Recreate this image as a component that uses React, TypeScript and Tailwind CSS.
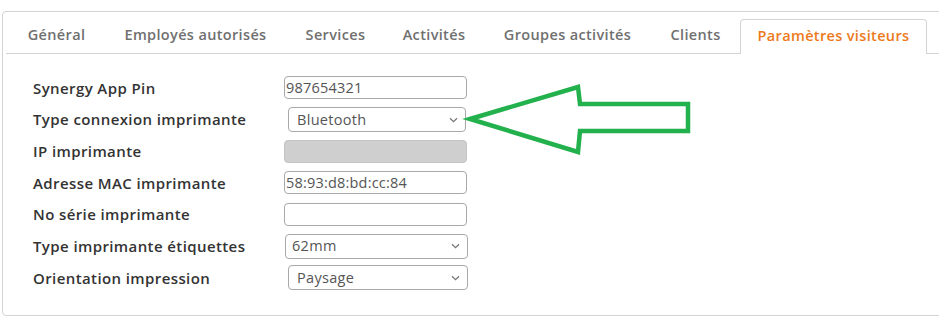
import React from "react";

const tabs: { label: string; w: number; active?: boolean }[] = [
  { label: "Général", w: 95 },
  { label: "Employés autorisés", w: 183 },
  { label: "Services", w: 97 },
  { label: "Activités", w: 100 },
  { label: "Groupes activités", w: 167 },
  { label: "Clients", w: 89 },
  { label: "Paramètres visiteurs", w: 187, active: true },
];

function Chevron() {
  return (
    <svg width="9" height="6" viewBox="0 0 9 6" className="absolute right-[7px] top-1/2 -translate-y-1/2">
      <path d="M1 1.2 L4.5 4.6 L8 1.2" fill="none" stroke="#777" strokeWidth="1.3" />
    </svg>
  );
}

function TextInput({ value, disabled }: { value?: string; disabled?: boolean }) {
  return (
    <div
      className={
        "h-[23px] w-[183px] rounded-[4px] border flex items-center pl-[1px] text-[14.5px] tracking-[0.2px] text-[#555] " +
        (disabled ? "bg-[#cfcfcf] border-[#c4c4c4]" : "bg-white border-[#a9a9a9]")
      }
    >
      {value}
    </div>
  );
}

function Select({ value, ml, w, pl }: { value: string; ml: number; w: number; pl: number }) {
  return (
    <div
      className="relative h-[25px] rounded-[4px] border border-[#a9a9a9] bg-white flex items-center text-[14.5px] tracking-[0.3px] text-[#555]"
      style={{ marginLeft: ml, width: w, paddingLeft: pl }}
    >
      {value}
      <Chevron />
    </div>
  );
}

export default function App() {
  const rows: { label: string; field: React.ReactNode }[] = [
    { label: "Synergy App Pin", field: <TextInput value="987654321" /> },
    { label: "Type connexion imprimante", field: <Select value="Bluetooth" ml={4} w={178} pl={8} /> },
    { label: "IP imprimante", field: <TextInput disabled /> },
    { label: "Adresse MAC imprimante", field: <TextInput value="58:93:d8:bd:cc:84" /> },
    { label: "No série imprimante", field: <TextInput /> },
    { label: "Type imprimante étiquettes", field: <Select value="62mm" ml={1} w={183} pl={6} /> },
    { label: "Orientation impression", field: <Select value="Paysage" ml={4} w={180} pl={8} /> },
  ];

  return (
    <div className="relative w-[939px] h-[327px] bg-white overflow-hidden" style={{ fontFamily: '"Open Sans", "Noto Sans", sans-serif' }}>
      <div className="pt-[11px] pl-[2px]">
        <div className="w-[960px] h-[305px] border border-[#d4d4d4] rounded-[4px] pl-[3px]">
          <div className="pt-[7px] pl-[3px] flex border-b border-[#d4d4d4]">
            {tabs.map((t) => (
              <div
                key={t.label}
                className={
                  "h-[34px] pb-[2px] flex items-center justify-center text-[14.5px] tracking-[0.35px] font-semibold " +
                  (t.active
                    ? "bg-white border border-b-0 border-[#d4d4d4] rounded-t-[4px] text-[#ec7a1c] -mb-[1px] h-[35px]"
                    : "text-[#707070]")
                }
                style={{ width: t.w }}
              >
                {t.label}
              </div>
            ))}
          </div>
          <div className="pt-[18px] pl-[27px]">
            {rows.map((r) => (
              <div key={r.label} className="h-[31.7px] flex items-center">
                <div className="w-[251px] text-[15px] tracking-[0.4px] font-semibold text-[#333]">{r.label}</div>
                {r.field}
              </div>
            ))}
          </div>
        </div>
      </div>
      <svg className="absolute left-0 top-0" width="939" height="327" viewBox="0 0 939 327">
        <polygon
          points="470,119 578,87 580,104 688,104 688,131 580,131 578,152"
          fill="none"
          stroke="#22b14c"
          strokeWidth="4.5"
          strokeLinejoin="miter"
        />
      </svg>
    </div>
  );
}
